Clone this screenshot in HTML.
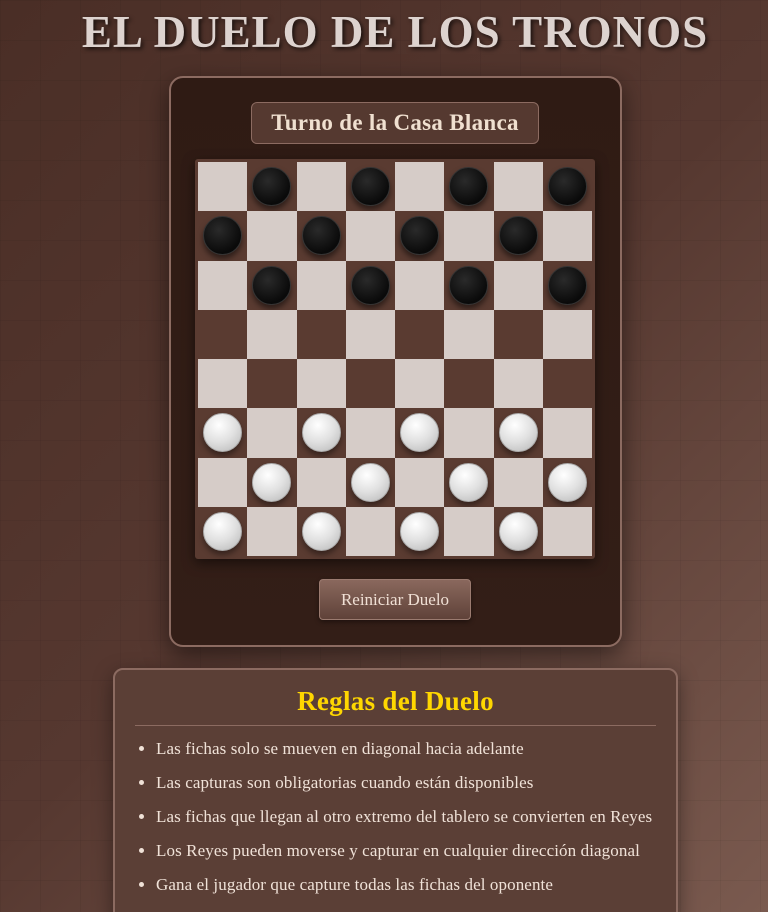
<!DOCTYPE html>
<html style="overflow:hidden;height:912px"><head><meta charset="utf-8"><style>
*{box-sizing:border-box;margin:0;padding:0}
body{width:768px;height:912px;overflow:hidden;font-family:"Liberation Serif",serif;
background:linear-gradient(135deg,#4a2e26 0%,#563830 50%,#7a5a4f 100%);position:relative}
body:before{content:"";position:absolute;inset:0;background-image:linear-gradient(rgba(0,0,0,.05) 1px,transparent 1px),linear-gradient(90deg,rgba(0,0,0,.05) 1px,transparent 1px);background-size:40px 40px}
h1{position:absolute;left:0;width:790px;top:6px;text-align:center;font-size:45px;font-weight:bold;color:#ddd3cf;letter-spacing:1px;text-shadow:2px 2px 4px rgba(0,0,0,.7)}
.box{position:absolute;left:169px;top:76px;width:453px;height:571px;background:linear-gradient(#2f1b14,#331e17);border:2px solid #8c6b61;border-radius:14px;box-shadow:0 8px 25px rgba(0,0,0,.5)}
.turn{position:absolute;left:251px;top:102px;width:288px;height:42px;background:#553930;border:1px solid #8c6b61;border-radius:6px;color:#f0e0d0;font-weight:bold;font-size:23px;letter-spacing:.3px;text-align:center;line-height:40px}
.board{position:absolute;left:195px;top:159px;width:400px;height:400px;background:#5a3b31;padding:3px;display:grid;grid-template-columns:repeat(8,1fr);grid-template-rows:repeat(8,1fr);border-radius:3px;box-shadow:0 4px 12px rgba(0,0,0,.5)}
.sq{position:relative}
.l{background:#d6ccc8}.d{background:#5a3b31}
.p{position:absolute;left:5px;top:5px;width:39px;height:39px;border-radius:50%}
.b{background:radial-gradient(circle at 40% 35%,#2a2a2a,#0a0a0a 70%);border:1px solid #333;box-shadow:0 4px 6px rgba(0,0,0,.5)}
.w{background:radial-gradient(circle at 40% 30%,#fff,#e0e0e0 50%,#b5b5b5);border:1px solid #aaa;box-shadow:0 4px 6px rgba(0,0,0,.4)}
.btn{position:absolute;left:319px;top:579px;width:152px;height:41px;background:linear-gradient(#8a685d,#5f4239);border:1px solid #9b7b70;border-radius:4px;color:#f0e0d5;font-size:17px;text-align:center;line-height:40px;box-shadow:0 2px 5px rgba(0,0,0,.4)}
.rules{position:absolute;left:113px;top:668px;width:565px;height:260px;background:#5b3f36;border:2px solid #8c6b61;border-radius:10px;box-shadow:0 6px 20px rgba(0,0,0,.4)}
.rules h2{text-align:center;color:#ffd700;font-size:27px;letter-spacing:.3px;margin-top:16px;font-weight:bold}
.rules hr{border:0;border-top:1px solid #8c6b61;margin:8px 20px 0}
.rules ul{margin:12px 0 0 41px;color:#f0e2d8;font-size:17px;letter-spacing:.1px;list-style:disc}
.rules li{height:34px;line-height:22px}
</style></head><body>
<h1>EL DUELO DE LOS TRONOS</h1>
<div class="box"></div>
<div class="turn">Turno de la Casa Blanca</div>
<div class="board">
<div class="sq l"></div><div class="sq d"><div class="p b"></div></div><div class="sq l"></div><div class="sq d"><div class="p b"></div></div><div class="sq l"></div><div class="sq d"><div class="p b"></div></div><div class="sq l"></div><div class="sq d"><div class="p b"></div></div>
<div class="sq d"><div class="p b"></div></div><div class="sq l"></div><div class="sq d"><div class="p b"></div></div><div class="sq l"></div><div class="sq d"><div class="p b"></div></div><div class="sq l"></div><div class="sq d"><div class="p b"></div></div><div class="sq l"></div>
<div class="sq l"></div><div class="sq d"><div class="p b"></div></div><div class="sq l"></div><div class="sq d"><div class="p b"></div></div><div class="sq l"></div><div class="sq d"><div class="p b"></div></div><div class="sq l"></div><div class="sq d"><div class="p b"></div></div>
<div class="sq d"></div><div class="sq l"></div><div class="sq d"></div><div class="sq l"></div><div class="sq d"></div><div class="sq l"></div><div class="sq d"></div><div class="sq l"></div>
<div class="sq l"></div><div class="sq d"></div><div class="sq l"></div><div class="sq d"></div><div class="sq l"></div><div class="sq d"></div><div class="sq l"></div><div class="sq d"></div>
<div class="sq d"><div class="p w"></div></div><div class="sq l"></div><div class="sq d"><div class="p w"></div></div><div class="sq l"></div><div class="sq d"><div class="p w"></div></div><div class="sq l"></div><div class="sq d"><div class="p w"></div></div><div class="sq l"></div>
<div class="sq l"></div><div class="sq d"><div class="p w"></div></div><div class="sq l"></div><div class="sq d"><div class="p w"></div></div><div class="sq l"></div><div class="sq d"><div class="p w"></div></div><div class="sq l"></div><div class="sq d"><div class="p w"></div></div>
<div class="sq d"><div class="p w"></div></div><div class="sq l"></div><div class="sq d"><div class="p w"></div></div><div class="sq l"></div><div class="sq d"><div class="p w"></div></div><div class="sq l"></div><div class="sq d"><div class="p w"></div></div><div class="sq l"></div>
</div>
<div class="btn">Reiniciar Duelo</div>
<div class="rules"><h2>Reglas del Duelo</h2><hr>
<ul>
<li>Las fichas solo se mueven en diagonal hacia adelante</li>
<li>Las capturas son obligatorias cuando están disponibles</li>
<li>Las fichas que llegan al otro extremo del tablero se convierten en Reyes</li>
<li>Los Reyes pueden moverse y capturar en cualquier dirección diagonal</li>
<li>Gana el jugador que capture todas las fichas del oponente</li>
</ul></div>
</body></html>
